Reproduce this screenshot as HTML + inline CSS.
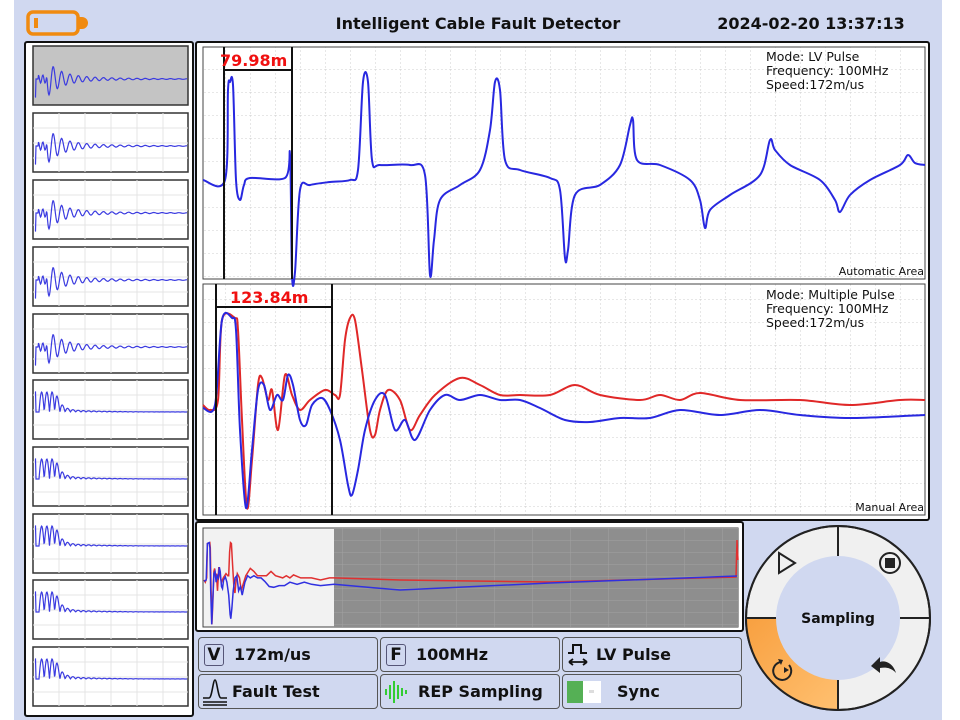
<!DOCTYPE html>
<html><head><meta charset="utf-8"><style>
*{margin:0;padding:0;box-sizing:border-box}
body{width:960px;height:720px;background:#fff;font-family:"DejaVu Sans","Liberation Sans",sans-serif;position:relative;overflow:hidden}
#bg{position:absolute;left:14px;top:0;width:928px;height:720px;background:#d0d8f0}
.btn{position:absolute;height:35px;background:#d0d8f0;border:1.5px solid #555;border-radius:4px;font-weight:bold;font-size:16px;color:#111;display:flex;align-items:center}
</style></head><body>
<div id="bg"></div>
<svg width="960" height="720" style="position:absolute;left:0;top:0" xmlns="http://www.w3.org/2000/svg">
<defs>
<pattern id="g" width="25" height="23" patternUnits="userSpaceOnUse"><path d="M0 0H25M0 0V23" stroke="#cfcfcf" stroke-width="1" stroke-dasharray="2 2" fill="none"/></pattern>
<pattern id="gs" width="38" height="12" patternUnits="userSpaceOnUse"><path d="M0 0H38M0 0V12" stroke="#ddd" stroke-width="1" fill="none"/></pattern>
<linearGradient id="og" x1="0" y1="0" x2="1" y2="1"><stop offset="0" stop-color="#f8a040"/><stop offset="1" stop-color="#ffc070"/></linearGradient>
</defs>
<rect x="28" y="12" width="50" height="22" rx="5" fill="none" stroke="#f08a10" stroke-width="3.5"/>
<path d="M79 17 h3 a5 5 0 0 1 0 12 h-3z" fill="#f08a10"/>
<rect x="34" y="18" width="4" height="10" fill="#f08a10"/>
<text x="478" y="29" text-anchor="middle" font-weight="bold" font-size="16" fill="#111">Intelligent Cable Fault Detector</text>
<text x="811" y="29" text-anchor="middle" font-weight="bold" font-size="16" fill="#111">2024-02-20 13:37:13</text>
<rect x="25" y="42" width="168" height="674" fill="#fff" stroke="#111" stroke-width="2" rx="2"/>
<g id="thumbs"></g>
<rect x="196" y="42" width="733" height="478" fill="#fff" stroke="#111" stroke-width="2" rx="2"/>
<rect x="203" y="47" width="722" height="232" fill="url(#g)" stroke="#444" stroke-width="1"/>
<rect x="203" y="284" width="722" height="231" fill="url(#g)" stroke="#444" stroke-width="1"/>
<path id="top" fill="none" stroke="#2828e0" stroke-width="2"/>
<path id="red" fill="none" stroke="#e02828" stroke-width="2"/>
<path id="blue" fill="none" stroke="#2828e0" stroke-width="2"/>
<path d="M224 47V279M292 47V279M224 70H292" stroke="#111" stroke-width="2"/>
<text x="220" y="66" font-weight="bold" font-size="16" fill="#f01010">79.98m</text>
<path d="M216 284V515M332 284V515M216 307H332" stroke="#111" stroke-width="2"/>
<text x="230" y="303" font-weight="bold" font-size="16" fill="#f01010">123.84m</text>
<g font-size="12.5" fill="#111"><text x="766" y="61">Mode: LV Pulse</text><text x="766" y="75">Frequency: 100MHz</text><text x="766" y="89">Speed:172m/us</text>
<text x="766" y="299">Mode: Multiple Pulse</text><text x="766" y="313">Frequency: 100MHz</text><text x="766" y="327">Speed:172m/us</text></g>
<g font-size="11" fill="#111"><text x="924" y="275" text-anchor="end">Automatic Area</text><text x="924" y="511" text-anchor="end">Manual Area</text></g>
<rect x="196" y="522" width="547" height="109" fill="#fff" stroke="#111" stroke-width="2" rx="2"/>
<rect x="203" y="528" width="535" height="99" fill="#f2f2f2" stroke="#444"/>
<rect x="334" y="528" width="404" height="99" fill="#8e8e8e"/>
<rect x="334" y="528" width="404" height="99" fill="url(#gs)" opacity="0.25"/>
<polyline id="ored" fill="none" stroke="#e03030" stroke-width="1.5"/>
<polyline id="oblue" fill="none" stroke="#3030e0" stroke-width="1.5"/>
<circle cx="838" cy="618" r="92" fill="#f0f0f0" stroke="#222" stroke-width="2"/>
<path d="M838 618 L746 618 A92 92 0 0 0 838 710Z" fill="url(#og)"/>
<circle cx="838" cy="618" r="92" fill="none" stroke="#222" stroke-width="2"/>
<path d="M838 526V556M838 680V710M746 618H776M900 618H930" stroke="#222" stroke-width="2"/>
<circle cx="838" cy="618" r="62" fill="#d0d8f0"/>
<text x="838" y="623" text-anchor="middle" font-weight="bold" font-size="14" fill="#111">Sampling</text>
<path d="M779 553 L795 563 L779 573Z" fill="none" stroke="#222" stroke-width="2"/>
<circle cx="890" cy="563" r="10" fill="none" stroke="#222" stroke-width="2"/><rect x="885" y="558" width="10" height="10" fill="#222"/>
<path d="M789 665 A9 9 0 1 1 781 662" fill="none" stroke="#222" stroke-width="2"/><path d="M778 659 l5 1 -2 5z" fill="#222"/><path d="M784 667 l5 3 -5 3z" fill="#222"/>
<path d="M896 673 C893 663 885 660 880 662 L880 657 L871 666 L880 673 L880 668 C886 667 892 668 896 673Z" fill="#222"/>
</svg>
<div class="btn" style="left:198px;top:637px;width:180px"><span style="margin-left:5px;border:1.5px solid #557;border-radius:3px;width:20px;height:22px;display:inline-flex;align-items:center;justify-content:center;font-size:17px">V</span><span style="margin-left:10px">172m/us</span></div>
<div class="btn" style="left:380px;top:637px;width:180px"><span style="margin-left:5px;border:1.5px solid #557;border-radius:3px;width:20px;height:22px;display:inline-flex;align-items:center;justify-content:center;font-size:17px">F</span><span style="margin-left:10px">100MHz</span></div>
<div class="btn" style="left:562px;top:637px;width:180px"><svg width="22" height="24" style="margin-left:4px"><path d="M1 10H6V2H14V10H20" fill="none" stroke="#111" stroke-width="2"/><path d="M2 19H20M2 19l4-3M2 19l4 3M20 19l-4-3M20 19l-4 3" stroke="#111" stroke-width="1.8" fill="none"/></svg><span style="margin-left:7px">LV Pulse</span></div>
<div class="btn" style="left:198px;top:674px;width:180px"><svg width="28" height="30" style="margin-left:2px"><path d="M2 21H8C11 21 12 3 14 3C16 3 17 21 20 21H26" fill="none" stroke="#111" stroke-width="1.6"/><path d="M2 25H26M2 28H26" stroke="#111" stroke-width="1.6"/></svg><span style="margin-left:3px">Fault Test</span></div>
<div class="btn" style="left:380px;top:674px;width:180px"><svg width="26" height="26" style="margin-left:2px"><path d="M3 10V16M7 6V20M11 2V24M15 6V20M19 9V17M23 11V15" stroke="#3c3" stroke-width="2"/></svg><span style="margin-left:9px">REP Sampling</span></div>
<div class="btn" style="left:562px;top:674px;width:180px"><span style="margin-left:4px;width:34px;height:22px;display:inline-flex;background:#fff"><span style="width:16px;background:#55b055"></span><span style="margin:9px 0 0 6px;width:5px;height:3px;background:#ddd"></span></span><span style="margin-left:16px">Sync</span></div>
<script>
function S(a){var d='M'+a[0][0]+' '+a[0][1];for(var i=0;i<a.length-1;i++){var p0=a[Math.max(0,i-1)],p1=a[i],p2=a[i+1],p3=a[Math.min(a.length-1,i+2)],k=0.16;
d+=' C'+(p1[0]+(p2[0]-p0[0])*k).toFixed(1)+' '+(p1[1]+(p2[1]-p0[1])*k).toFixed(1)+' '+(p2[0]-(p3[0]-p1[0])*k).toFixed(1)+' '+(p2[1]-(p3[1]-p1[1])*k).toFixed(1)+' '+p2[0]+' '+p2[1];}return d;}
function P(id,a){document.getElementById(id).setAttribute('d',S(a));}
function L(id,a){document.getElementById(id).setAttribute('points',a.map(p=>p.join(',')).join(' '));}
P('top',[[203,180],[225,180],[228,90],[230,82],[233,85],[236,180],[240,200],[244,185],[250,178],[285,178],[290,155],[292,275],[295,272],[300,190],[310,185],[330,182],[350,180],[358,170],[363,82],[368,82],[372,160],[380,165],[410,165],[425,175],[430,275],[434,240],[440,200],[460,185],[480,170],[490,130],[495,82],[500,90],[505,160],[520,170],[550,178],[560,190],[565,258],[568,250],[575,195],[600,185],[620,165],[630,125],[633,120],[637,160],[660,165],[690,180],[700,200],[705,228],[710,210],[730,195],[760,175],[770,140],[775,150],[790,165],[820,180],[835,200],[840,212],[850,195],[870,180],[900,165],[908,155],[915,163],[925,165]]);
var R=[[203,405],[210,410],[218,400],[222,320],[235,318],[238,330],[242,420],[247,508],[252,460],[258,385],[262,378],[268,400],[272,390],[278,430],[285,375],[292,395],[300,410],[310,400],[325,390],[335,395],[340,395],[345,340],[350,318],[355,320],[362,370],[370,430],[375,435],[380,410],[388,390],[400,400],[410,430],[420,415],[435,395],[460,378],[480,385],[500,395],[520,395],[550,395],[575,385],[600,395],[640,400],[660,395],[680,400],[700,393],[740,400],[800,400],[850,405],[900,400],[925,400]];
var B=[[203,408],[215,405],[222,320],[232,318],[236,330],[240,430],[246,508],[252,450],[258,390],[264,385],[270,410],[277,395],[283,400],[288,375],[293,385],[300,420],[306,425],[312,405],[322,398],[330,410],[340,440],[348,485],[352,495],[358,470],[365,430],[375,400],[385,395],[395,430],[405,420],[415,440],[430,410],[445,395],[460,400],[480,395],[500,400],[520,400],[540,408],[565,420],[590,422],[620,418],[650,418],[680,410],[720,415],[760,410],[800,415],[850,418],[925,415]];
P('red',R);P('blue',B);
function ov(a){return a.map(p=>[+(204+(p[0]-203)*0.18).toFixed(1),+(528+(p[1]-284)*0.43).toFixed(1)]);}
var orr=ov(R);orr.push([400,580],[550,582],[736,577],[737,540],[738,560]);
var ob=ov(B);ob.push([400,590],[550,583],[737,576]);
L('ored',orr);L('oblue',ob);
var g='',ys=[46,113,180,247,314,380,447,514,580,647];
ys.forEach(function(y,i){
 var sel=i==0;
 g+='<rect x="33" y="'+y+'" width="155" height="59" fill="'+(sel?'#c4c4c4':'#fff')+'" stroke="#333" stroke-width="1.5"/>';
 if(!sel){for(var k=1;k<6;k++)g+='<line x1="'+(33+k*26)+'" y1="'+y+'" x2="'+(33+k*26)+'" y2="'+(y+59)+'" stroke="#e4e4e4"/>';
  for(var k=1;k<4;k++)g+='<line x1="33" y1="'+(y+k*15)+'" x2="188" y2="'+(y+k*15)+'" stroke="#e4e4e4"/>';}
 var pts=[],c=y+(i<5?33:32);
 for(var x=35;x<=187;x+=0.5){var t=x-35,v;
  if(i<5){v=(t<1?18:0)+(t>3&&t<12?Math.sin(t*1.4)*4:0)+(t>=12?Math.sin((t-12)*0.75)*15*Math.exp(-(t-12)/14):0)+(t>=12?Math.sin((t-12)*0.75)*3*Math.exp(-(t-12)/60):0);}
  else{var A=t<4?0:(t<20?20:20*Math.exp(-(t-20)/5)+3*Math.exp(-(t-20)/35));v=t<1?-20:-Math.abs(Math.sin((t-4)*0.6))*A;}
  pts.push(x+','+(c+v).toFixed(1));}
 g+='<polyline points="'+pts.join(' ')+'" fill="none" stroke="#3b3be0" stroke-width="1.2"/>';
});
document.getElementById('thumbs').innerHTML=g;
</script>
</body></html>
